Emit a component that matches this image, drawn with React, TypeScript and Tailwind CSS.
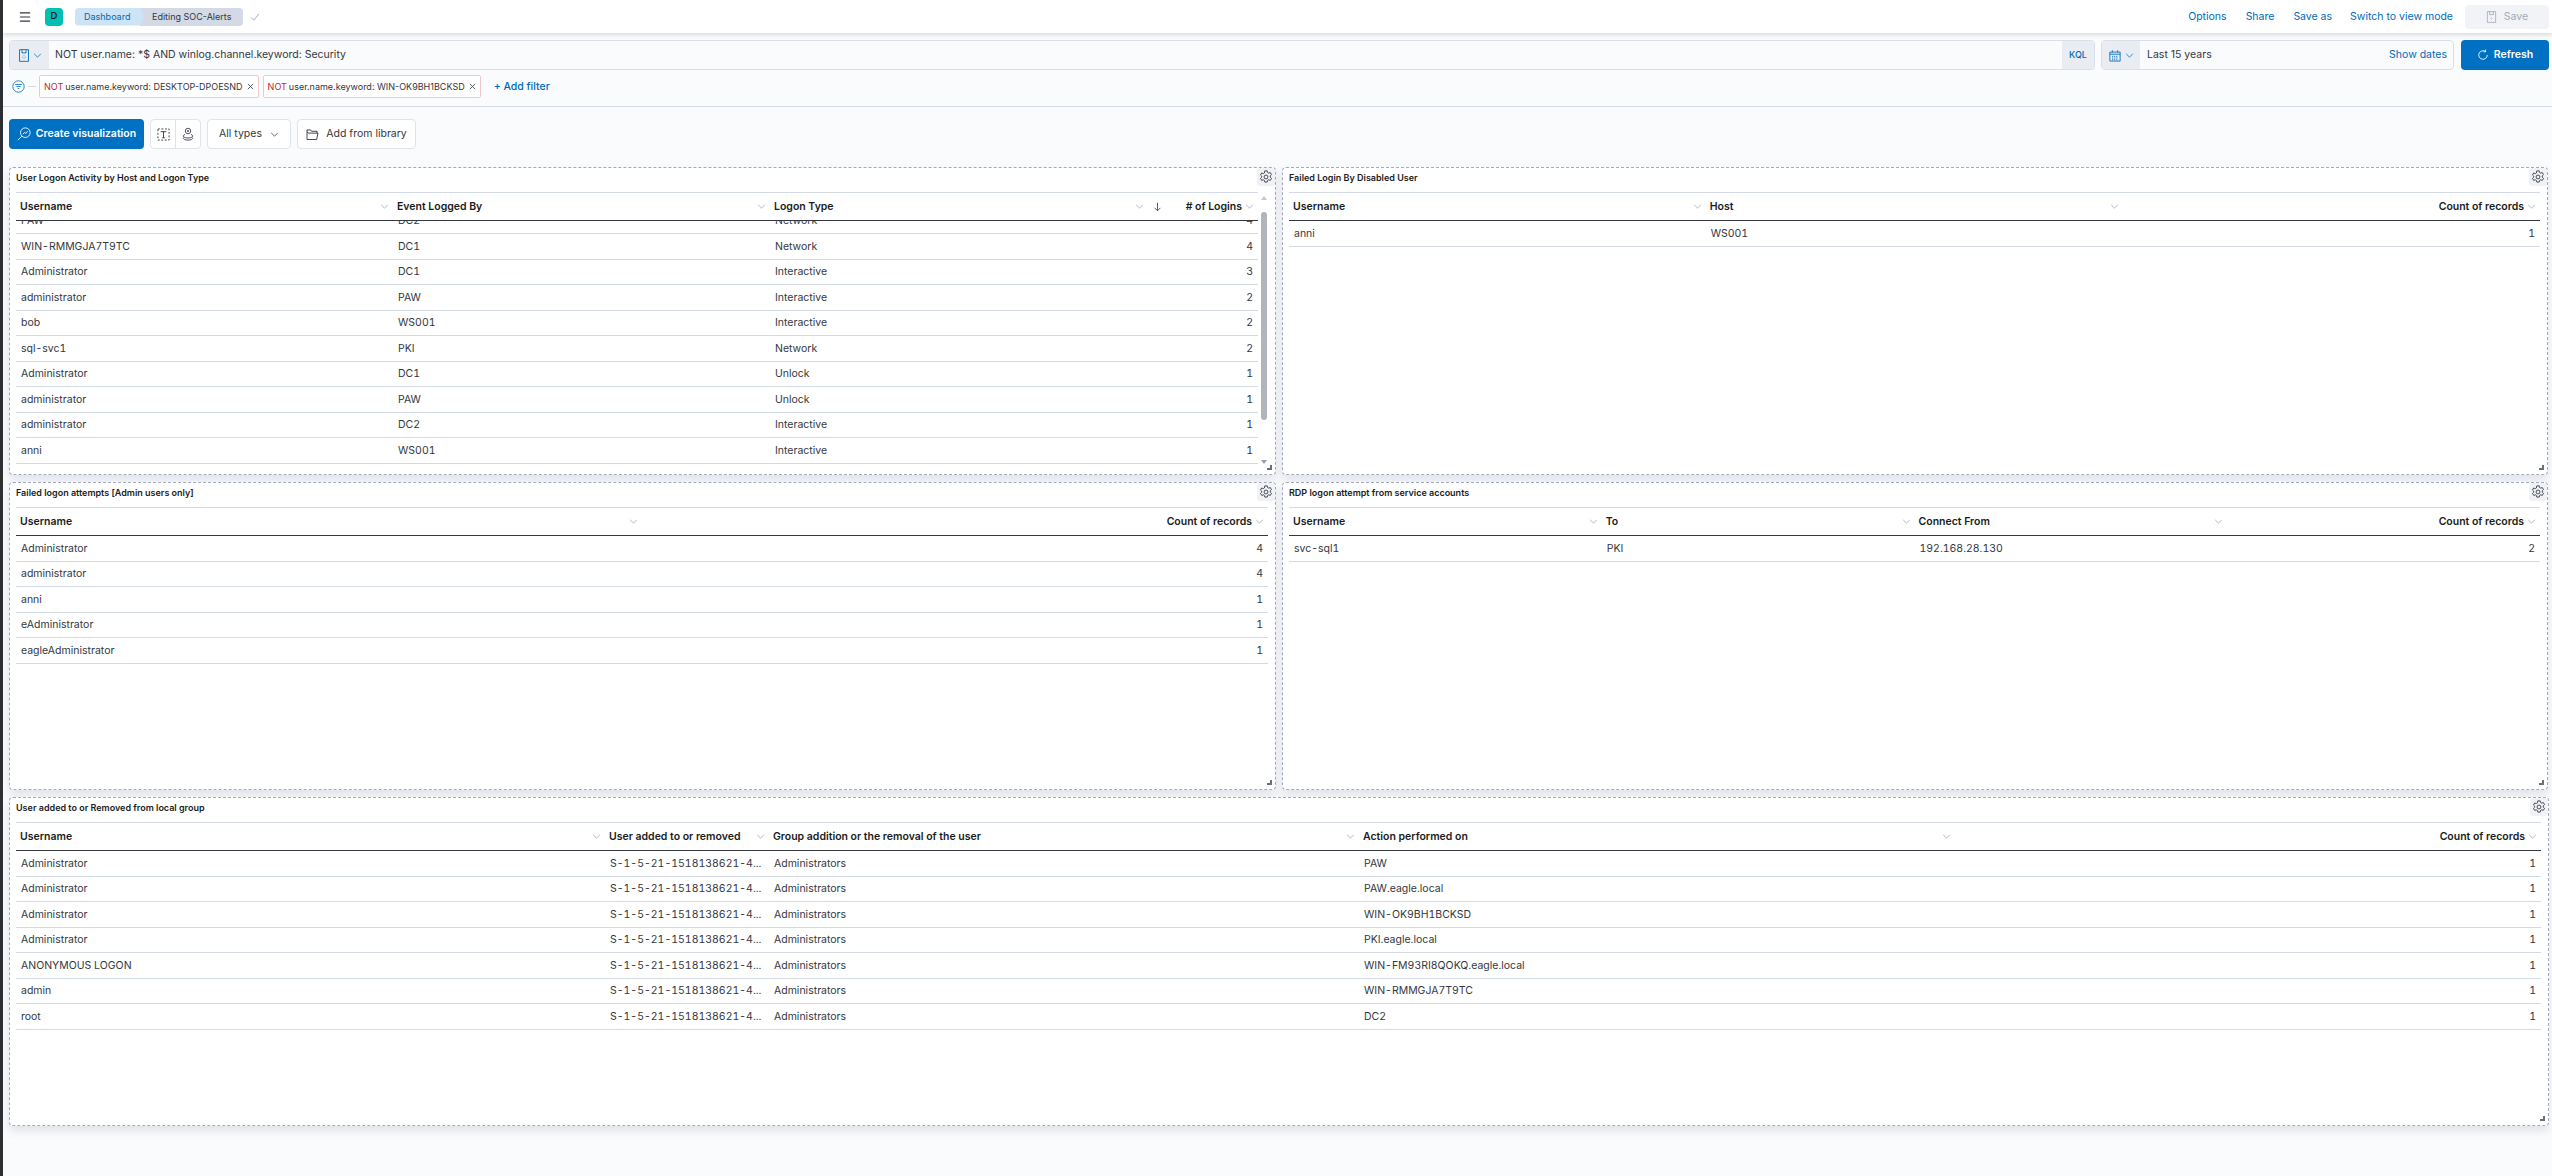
import { Menu } from "lucide-react";

interface Column {
  label: string;
  width: number;
  right?: boolean;
  sorted?: boolean;
}

interface TablePanelProps {
  title: string;
  height: number;
  columns: Column[];
  rows: string[][];
  scrolled?: boolean;
  tableInset?: number;
}

function Chevron({ className = "" }: { className?: string }) {
  return (
    <svg viewBox="0 0 10 6" className={`h-[5px] w-[9px] shrink-0 ${className}`} fill="none" stroke="currentColor" strokeWidth="0.9">
      <path d="M1 1l4 4 4-4" />
    </svg>
  );
}

function SaveGlyph({ className = "" }: { className?: string }) {
  return (
    <svg viewBox="0 0 14 16" className={className} fill="none" stroke="currentColor" strokeWidth="1.1">
      <path d="M1.5.8h11v14.4h-11zM4.5.8v4h5v-4" />
      <path d="M7 8v.8M7 11v.8M5 10h.6M8.4 10h.6" />
    </svg>
  );
}

function GearGlyph() {
  return (
    <svg viewBox="0 0 16 16" className="h-[14px] w-[14px]" fill="none" stroke="#343741" strokeWidth="1">
      <path d="M6.6 1h2.8l.4 1.9 1.3.7 1.8-.7 1.4 2.4-1.4 1.3v1.6l1.4 1.3-1.4 2.4-1.8-.7-1.3.7-.4 1.9H6.6l-.4-1.9-1.3-.7-1.8.7-1.4-2.4 1.4-1.3V7.1L1.7 5.8l1.4-2.4 1.8.7 1.3-.7z" />
      <circle cx="8" cy="8" r="2.2" />
    </svg>
  );
}

function TablePanel({ title, height, columns, rows, scrolled = false, tableInset = 7 }: TablePanelProps) {
  return (
    <div
      className="relative rounded-[4px] border border-dashed border-[#a4a9c2] bg-white shadow-[0_5px_10px_rgba(60,70,90,0.13)]"
      style={{ height }}
    >
      <div className="flex h-[24px] items-center pb-[4px] pl-[6px] text-[9px] font-semibold text-[#1a1c21]">{title}</div>
      <div className="absolute right-0 top-0 flex h-[18px] w-[18px] items-center justify-center rounded-[3px] bg-[#f0f2f5]">
        <GearGlyph />
      </div>

      <div className="ml-[6px]" style={{ marginRight: tableInset }}>
        <div className="flex h-[29px] border-b border-t border-b-[#343741] border-t-[#d3dae6]">
          {columns.map((col) => (
            <div
              key={col.label}
              className="flex items-center px-[4px] text-[10.5px] font-semibold text-[#1a1c21]"
              style={{ width: col.width }}
            >
              {col.sorted && (
                <svg viewBox="0 0 10 12" className="ml-[1px] h-[10px] w-[9px] text-[#343741]" fill="none" stroke="currentColor">
                  <path d="M5 1v9.5M1.5 7l3.5 3.5L8.5 7" />
                </svg>
              )}
              <span className={`${col.right ? "ml-auto" : ""} whitespace-nowrap`}>{col.label}</span>
              <Chevron className={`text-[#98a2b3] ${col.right ? "ml-[3px]" : "ml-auto"}`} />
            </div>
          ))}
        </div>
        <div className={scrolled ? "h-[243px] overflow-hidden" : ""}>
          <div className={scrolled ? "-mt-[12.5px]" : ""}>
            {rows.map((row, i) => (
              <div key={i} className="flex h-[25.5px]">
                {row.map((cell, j) => (
                  <div
                    key={j}
                    className={`flex items-center border-b border-[#d3dae6] px-[5px] pt-[1px] text-[10.5px] tabular-nums text-[#343741] ${columns[j].right ? "justify-end" : ""}`}
                    style={{ width: columns[j].width }}
                  >
                    <span className="whitespace-nowrap">{cell}</span>
                  </div>
                ))}
              </div>
            ))}
          </div>
        </div>
      </div>

      {scrolled && (
        <div className="absolute bottom-[10px] right-[8px] top-[28px] w-[6px]">
          <div className="mx-auto h-0 w-0 border-x-[3px] border-b-[4px] border-x-transparent border-b-[#c4c7cc]" />
          <div className="mt-[12px] h-[208px] rounded-[3px] bg-[#b1b5bb]" />
          <div className="absolute bottom-0 left-0 h-0 w-0 border-x-[3px] border-t-[4px] border-x-transparent border-t-[#9aa0a8]" />
        </div>
      )}
      <div className="absolute bottom-[4px] right-[3px] h-[5px] w-[5px] border-b-2 border-r-2 border-[#69707d]" />
    </div>
  );
}

const logonRows = [
  ["PAW", "DC2", "Network", "4"],
  ["WIN-RMMGJA7T9TC", "DC1", "Network", "4"],
  ["Administrator", "DC1", "Interactive", "3"],
  ["administrator", "PAW", "Interactive", "2"],
  ["bob", "WS001", "Interactive", "2"],
  ["sql-svc1", "PKI", "Network", "2"],
  ["Administrator", "DC1", "Unlock", "1"],
  ["administrator", "PAW", "Unlock", "1"],
  ["administrator", "DC2", "Interactive", "1"],
  ["anni", "WS001", "Interactive", "1"],
];

const sid = "S-1-5-21-1518138621-4...";

const groupRows = [
  ["Administrator", sid, "Administrators", "PAW", "1"],
  ["Administrator", sid, "Administrators", "PAW.eagle.local", "1"],
  ["Administrator", sid, "Administrators", "WIN-OK9BH1BCKSD", "1"],
  ["Administrator", sid, "Administrators", "PKI.eagle.local", "1"],
  ["ANONYMOUS LOGON", sid, "Administrators", "WIN-FM93RI8QOKQ.eagle.local", "1"],
  ["admin", sid, "Administrators", "WIN-RMMGJA7T9TC", "1"],
  ["root", sid, "Administrators", "DC2", "1"],
];

function FilterPill({ value }: { value: string }) {
  return (
    <div className="flex h-[23px] items-center whitespace-nowrap rounded-[2px] border border-[#f0c9c6] bg-white px-[4px] text-[9px] text-[#343741]">
      <span className="text-[#bd271e]">NOT</span>
      <span className="ml-[2px]">user.name.keyword: {value}</span>
      <svg viewBox="0 0 8 8" className="ml-[4px] h-[7px] w-[7px]" fill="none" stroke="#343741" strokeWidth="0.9">
        <path d="M1 1l6 6M7 1L1 7" />
      </svg>
    </div>
  );
}

export default function App() {
  return (
    <div className="h-[1176px] w-full overflow-hidden border-l-[3px] border-[#2d2f33] bg-[#fafbfd] [font-family:Inter,'Noto_Sans',sans-serif]">
      {/* top nav */}
      <header className="relative flex h-[33px] items-center bg-white pl-[15px] pr-[3px] shadow-[0_2px_4px_rgba(60,70,90,0.18)]">
        <Menu className="h-[16px] w-[14px] text-[#343741]" strokeWidth={2} />
        <div className="ml-[13px] flex h-[18px] w-[18px] items-center justify-center rounded-[4px] bg-[#00bfb3] text-[9.5px] font-semibold text-[#1a1c21]">
          D
        </div>
        <div className="ml-[12px] flex h-[18px] whitespace-nowrap text-[9px] leading-[18px]">
          <div className="relative z-10 w-[69px] rounded-l-[4px] bg-[#cce4f5] pl-[9px] text-[#006bb8] [clip-path:polygon(0_0,calc(100%-4px)_0,100%_50%,calc(100%-4px)_100%,0_100%)]">
            Dashboard
          </div>
          <div className="-ml-[4px] w-[103px] rounded-r-[4px] bg-[#d3dae6] pl-[12px] text-[#343741]">Editing SOC-Alerts</div>
        </div>
        <svg viewBox="0 0 12 10" className="ml-[7px] h-[8px] w-[10px] text-[#98a2b3]" fill="none" stroke="currentColor" strokeWidth="1.1">
          <path d="M1 5.5L4.5 9 11 1" />
        </svg>
        <nav className="ml-auto flex items-center text-[10.5px] text-[#006bb8]">
          <span>Options</span>
          <span className="ml-[19px]">Share</span>
          <span className="ml-[19px]">Save as</span>
          <span className="ml-[18px]">Switch to view mode</span>
          <div className="ml-[12px] flex h-[24px] w-[84px] items-center justify-center rounded-[4px] bg-[#f1f3f6] text-[#a2abba]">
            <SaveGlyph className="h-[12px] w-[11px]" />
            <span className="ml-[7px]">Save</span>
          </div>
        </nav>
      </header>

      {/* query bar */}
      <div className="mr-[3px] ml-[6px] mt-[7px] flex h-[30px] text-[10.5px] text-[#343741]">
        <div className="flex min-w-0 flex-1 overflow-hidden rounded-[4px] border border-[#d9dfea]">
          <div className="flex w-[39px] items-center justify-center gap-[3px] bg-[#e9edf3] text-[#006bb8]">
            <SaveGlyph className="h-[13px] w-[12px]" />
            <Chevron />
          </div>
          <div className="flex flex-1 items-center pl-[6px]">NOT user.name: *$ AND winlog.channel.keyword: Security</div>
          <div className="flex w-[32px] items-center justify-center bg-[#e9edf3] text-[9px] font-medium text-[#006bb8]">KQL</div>
        </div>
        <div className="ml-[6px] flex w-[353px] overflow-hidden rounded-[4px] border border-[#d9dfea]">
          <div className="flex w-[38px] items-center justify-center gap-[4px] bg-[#e9edf3] text-[#006bb8]">
            <svg viewBox="0 0 14 14" className="h-[13px] w-[12px]" fill="none" stroke="currentColor" strokeWidth="1">
              <path d="M1 3h12v10.5H1zM1 5.5h12M4 1v2.5M10 1v2.5" />
              <path d="M3.5 8h7M3.5 10h7M3.5 12h7" strokeDasharray="1.2 1" />
            </svg>
            <Chevron />
          </div>
          <div className="flex flex-1 items-center justify-between pl-[7px] pr-[6px]">
            <span>Last 15 years</span>
            <span className="text-[#006bb8]">Show dates</span>
          </div>
        </div>
        <button className="ml-[7px] flex w-[88px] items-center justify-center gap-[5px] rounded-[4px] bg-[#0071c2] font-semibold text-white">
          <svg viewBox="0 0 14 14" className="h-[12px] w-[12px]" fill="none" stroke="currentColor" strokeWidth="1">
            <path d="M12 7a5 5 0 1 1-2-4M10 .8V3.2H7.6" />
          </svg>
          Refresh
        </button>
      </div>

      {/* filters */}
      <div className="flex h-[37px] items-start border-b border-[#d3dae6] pl-[9px] pt-[5px]">
        <div className="flex h-[23px] items-center">
          <svg viewBox="0 0 16 16" className="h-[13px] w-[13px] text-[#006bb8]" fill="none" stroke="currentColor" strokeWidth="1">
            <circle cx="8" cy="8" r="7" />
            <path d="M4 5.5h8M5.5 8h5M7 10.5h2" />
          </svg>
          <div className="ml-[3px] h-px w-[8px] bg-[#d3dae6]" />
        </div>
        <div className="ml-[3px] flex items-center gap-[4px]">
          <FilterPill value="DESKTOP-DPOESND" />
          <FilterPill value="WIN-OK9BH1BCKSD" />
          <span className="ml-[9px] text-[10.5px] font-medium text-[#006bb8]">+ Add filter</span>
        </div>
      </div>

      {/* panel toolbar */}
      <div className="ml-[6px] mt-[12px] flex h-[30px] gap-[6px] text-[10.5px] text-[#343741]">
        <button className="flex w-[135px] items-center justify-center gap-[5px] rounded-[4px] bg-[#0071c2] font-semibold text-white">
          <svg viewBox="0 0 16 16" className="h-[14px] w-[14px]" fill="none" stroke="currentColor" strokeWidth="1">
            <circle cx="9.5" cy="6.5" r="5.5" />
            <path d="M5.5 10.5L1 15M6.8 8.2l1.8-2 1.6 1.2 2-2.6" />
          </svg>
          Create visualization
        </button>
        <div className="flex w-[51px] rounded-[4px] border border-[#dfe3ea] bg-white">
          <div className="flex flex-1 items-center justify-center border-r border-[#dfe3ea]">
            <svg viewBox="0 0 14 14" className="h-[13px] w-[13px]" fill="none" stroke="currentColor" strokeWidth="1">
              <rect x="1" y="1" width="12" height="12" strokeDasharray="2 1.8" />
              <path d="M4 4h6M7 4v6.5M5.6 10.5h2.8" />
            </svg>
          </div>
          <div className="flex flex-1 items-center justify-center">
            <svg viewBox="0 0 14 16" className="h-[14px] w-[12px]" fill="none" stroke="currentColor" strokeWidth="1">
              <circle cx="7" cy="4.5" r="3.2" />
              <circle cx="7" cy="4.5" r="0.8" />
              <path d="M3.5 8.5C1.5 9.3 1 10.5 2 11.5c2 1.6 8 1.6 10 0 1-1 .5-2.2-1.5-3M2 12.2c-.6 1 0 1.8 1 2.3 2 .8 6 .8 8 0 1-.5 1.6-1.3 1-2.3" />
            </svg>
          </div>
        </div>
        <div className="flex w-[84px] items-center justify-center gap-[8px] rounded-[4px] border border-[#dfe3ea] bg-white">
          All types
          <Chevron />
        </div>
        <div className="flex w-[119px] items-center justify-center gap-[7px] rounded-[4px] border border-[#dfe3ea] bg-white">
          <svg viewBox="0 0 14 12" className="h-[11px] w-[13px]" fill="none" stroke="currentColor" strokeWidth="1">
            <path d="M1 3.5V1h4l1 1.5h6v2M1 3.5v8h10.5L13 4.5H3z" />
          </svg>
          Add from library
        </div>
      </div>

      {/* dashboard grid */}
      <div className="ml-[6px] mr-[3px] mt-[18px] flex flex-col gap-[7px]">
        <div className="grid grid-cols-[1267px_1266px] gap-x-[6px] gap-y-[7px]">
          <TablePanel
            title="User Logon Activity by Host and Logon Type"
            height={308}
            scrolled
            tableInset={17}
            columns={[
              { label: "Username", width: 377 },
              { label: "Event Logged By", width: 377 },
              { label: "Logon Type", width: 378 },
              { label: "# of Logins", width: 110, right: true, sorted: true },
            ]}
            rows={logonRows}
          />
          <TablePanel
            title="Failed Login By Disabled User"
            height={308}
            columns={[
              { label: "Username", width: 417 },
              { label: "Host", width: 418 },
              { label: "Count of records", width: 417, right: true },
            ]}
            rows={[["anni", "WS001", "1"]]}
          />
          <TablePanel
            title="Failed logon attempts [Admin users only]"
            height={308}
            columns={[
              { label: "Username", width: 627 },
              { label: "Count of records", width: 627, right: true },
            ]}
            rows={[
              ["Administrator", "4"],
              ["administrator", "4"],
              ["anni", "1"],
              ["eAdministrator", "1"],
              ["eagleAdministrator", "1"],
            ]}
          />
          <TablePanel
            title="RDP logon attempt from service accounts"
            height={308}
            columns={[
              { label: "Username", width: 313 },
              { label: "To", width: 313 },
              { label: "Connect From", width: 313 },
              { label: "Count of records", width: 313, right: true },
            ]}
            rows={[["svc-sql1", "PKI", "192.168.28.130", "2"]]}
          />
        </div>
        <TablePanel
          title="User added to or Removed from local group"
          height={329}
          columns={[
            { label: "Username", width: 589 },
            { label: "User added to or removed", width: 164 },
            { label: "Group addition or the removal of the user", width: 590 },
            { label: "Action performed on", width: 596 },
            { label: "Count of records", width: 586, right: true },
          ]}
          rows={groupRows}
        />
      </div>
    </div>
  );
}
